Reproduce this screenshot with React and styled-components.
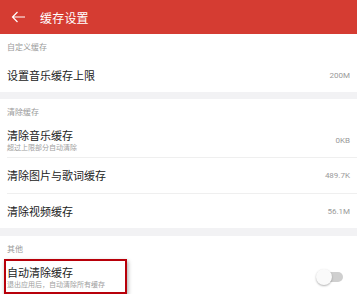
import React from "react";
import styled, { createGlobalStyle } from "styled-components";

const Global = createGlobalStyle`
  html, body { margin: 0; padding: 0; }
  body {
    background: #f2f2f4;
    font-family: "Noto Sans CJK SC", "Noto Sans", Roboto, sans-serif;
    -webkit-font-smoothing: antialiased;
  }
`;

const Page = styled.div`
  width: 357px;
  height: 294px;
  overflow: hidden;
  background: #f2f2f4;
  display: flex;
  flex-direction: column;
`;

const Header = styled.div`
  height: 34px;
  flex: none;
  background: #d53c32;
  display: flex;
  align-items: center;
  padding-left: 11px;
  gap: 14px;
  color: #fff;
`;

const Title = styled.div`
  font-size: 12px;
  line-height: 1;
  letter-spacing: 0.2px;
  margin-top: 1px;
`;

const Section = styled.div`
  background: #fff;
  margin-top: ${(p) => p.$gap || 0}px;
  flex: none;
`;

const Label = styled.div`
  height: 24px;
  display: flex;
  align-items: center;
  padding-left: 7px;
  font-size: 8px;
  color: #9a9a9a;
`;

const Row = styled.div`
  position: relative;
  height: ${(p) => p.$h || 34}px;
  margin-left: 7px;
  padding-right: 7px;
  display: flex;
  align-items: center;
  justify-content: space-between;
  border-bottom: ${(p) => (p.$divider ? "1px solid #efefef" : "none")};
`;

const Texts = styled.div`
  display: flex;
  flex-direction: column;
`;

const Name = styled.div`
  font-size: 11px;
  line-height: 13px;
  color: #222;
`;

const Sub = styled.div`
  font-size: 7px;
  line-height: 9px;
  color: #a0a0a0;
  margin-top: 1px;
`;

const Value = styled.div`
  font-size: 8px;
  color: #9a9a9a;
  font-family: Roboto, "Noto Sans", sans-serif;
`;

const Toggle = styled.div`
  position: relative;
  width: 25px;
  height: 10px;
  border-radius: 5px;
  background: #cfcfcf;
  margin-right: 7px;
`;

const Thumb = styled.div`
  position: absolute;
  left: -2px;
  top: -3px;
  width: 16px;
  height: 16px;
  border-radius: 50%;
  background: #fafafa;
  box-shadow: 0 1px 2px rgba(0, 0, 0, 0.3);
`;

const Highlight = styled.div`
  position: absolute;
  left: -3px;
  top: -1px;
  width: 119px;
  height: 31px;
  border: 2px solid #b8000a;
  box-shadow: 1px 2px 4px rgba(0, 0, 0, 0.35);
  pointer-events: none;
`;

const BackArrow = () => (
  <svg width="15" height="12" viewBox="0 0 15 12" fill="none">
    <path d="M14 6H1.5M6.5 1L1.5 6l5 5" stroke="#fff" strokeWidth="1.2" />
  </svg>
);

export default function App() {
  return (
    <>
      <Global />
      <Page>
        <Header>
          <BackArrow />
          <Title>缓存设置</Title>
        </Header>

        <Section>
          <Label>自定义缓存</Label>
          <Row>
            <Name>设置音乐缓存上限</Name>
            <Value>200M</Value>
          </Row>
        </Section>

        <Section $gap={7}>
          <Label>清除缓存</Label>
          <Row $divider $h={34}>
            <Texts>
              <Name>清除音乐缓存</Name>
              <Sub>超过上限部分自动清除</Sub>
            </Texts>
            <Value>0KB</Value>
          </Row>
          <Row $divider $h={35}>
            <Name>清除图片与歌词缓存</Name>
            <Value>489.7K</Value>
          </Row>
          <Row $h={34}>
            <Name>清除视频缓存</Name>
            <Value>56.1M</Value>
          </Row>
        </Section>

        <Section $gap={8}>
          <Label>其他</Label>
          <Row $divider $h={34}>
            <Texts>
              <Name>自动清除缓存</Name>
              <Sub>退出应用后，自动清除所有缓存</Sub>
            </Texts>
            <Toggle>
              <Thumb />
            </Toggle>
            <Highlight />
          </Row>
        </Section>
      </Page>
    </>
  );
}
